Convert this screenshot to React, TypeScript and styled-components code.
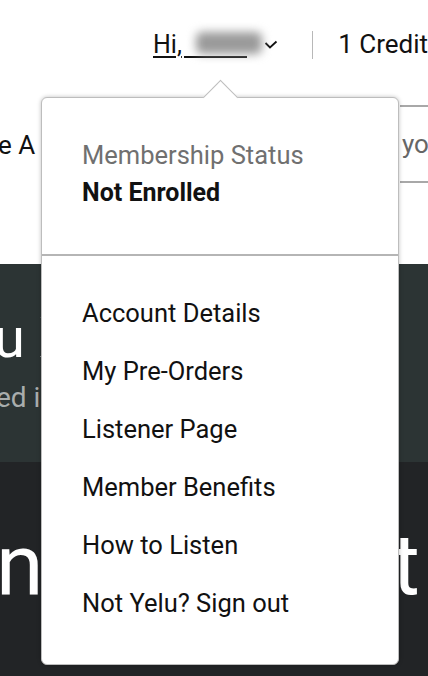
import styled, { createGlobalStyle } from 'styled-components';

const GlobalStyle = createGlobalStyle`
  body {
    margin: 0;
    background: #fff;
    font-family: Roboto, 'Liberation Sans', sans-serif;
    color: #111;
    overflow: hidden;
  }
`;

const menuLinks = [
  'Account Details',
  'My Pre-Orders',
  'Listener Page',
  'Member Benefits',
  'How to Listen',
  'Not Yelu? Sign out',
];

const Chevron = () => (
  <svg width="14" height="10" viewBox="0 0 14 10">
    <polyline
      points="1.5,3 6,7.5 12.5,1.5"
      fill="none"
      stroke="#111"
      strokeWidth="1.8"
    />
  </svg>
);

const App = () => {
  return (
    <Page>
      <GlobalStyle />
      <TopBar>
        <Greeting>
          <span className="hi">Hi,</span>
          <NameSlot>
            <span className="blur" />
          </NameSlot>
          <Chevron />
        </Greeting>
        <VDivider />
        <Credits>1 Credit</Credits>
      </TopBar>

      <SubBar>
        <SubText>e A</SubText>
        <SearchBox>you</SearchBox>
      </SubBar>

      <Hero>
        <HeroTitle>u X</HeroTitle>
        <HeroSub>ed in</HeroSub>
      </Hero>

      <Lower>
        <BigLetter>n</BigLetter>
        <BigLetter>t</BigLetter>
      </Lower>

      <Dropdown>
        <Status>
          <span className="label">Membership Status</span>
          <span className="value">Not Enrolled</span>
        </Status>
        <MenuList>
          {menuLinks.map((link) => (
            <MenuItem key={link}>{link}</MenuItem>
          ))}
        </MenuList>
      </Dropdown>
    </Page>
  );
};

const Page = styled.div`
  position: relative;
  width: 428px;
  height: 676px;
  overflow: hidden;
`;

const TopBar = styled.div`
  display: flex;
  align-items: center;
  height: 88px;
  padding-left: 153px;
  font-size: 25px;
  white-space: nowrap;
`;

const Greeting = styled.div`
  display: flex;
  align-items: center;

  .hi {
    text-decoration: underline;
    text-decoration-thickness: 2px;
    text-underline-offset: 3px;
  }

  svg {
    margin-left: 17px;
    margin-top: 2px;
  }
`;

const NameSlot = styled.span`
  position: relative;
  display: inline-block;
  width: 63px;
  height: 26px;
  margin-left: 2px;
  border-bottom: 2px solid #111;

  .blur {
    position: absolute;
    left: 12px;
    top: 2px;
    width: 66px;
    height: 22px;
    background: #9a9a9a;
    border-radius: 6px;
    filter: blur(5px);
  }
`;

const VDivider = styled.span`
  width: 2px;
  height: 28px;
  margin: 2px 26px 0 34px;
  background: #b8b8b8;
`;

const Credits = styled.span`
  font-size: 26px;
  color: #111;
`;

const SubBar = styled.div`
  display: flex;
  justify-content: space-between;
  align-items: flex-start;
  height: 176px;
`;

const SubText = styled.span`
  margin-top: 42px;
  font-size: 26px;
  line-height: 30px;
  margin-left: -2px;
`;

const SearchBox = styled.div`
  width: 28px;
  height: 78px;
  margin-top: 17px;
  border-top: 2px solid #a8a8a8;
  border-bottom: 2px solid #a8a8a8;
  padding-left: 2px;
  box-sizing: border-box;
  display: flex;
  align-items: center;
  font-size: 26px;
  color: #666;
  overflow: hidden;
`;

const Hero = styled.div`
  height: 198px;
  background: #2c3434;
  padding-top: 44px;
  box-sizing: border-box;
  color: #fff;
`;

const HeroTitle = styled.div`
  font-size: 56px;
  line-height: 60px;
  margin-left: -6px;
`;

const HeroSub = styled.div`
  margin-top: 14px;
  font-size: 28px;
  line-height: 32px;
  color: #a9adad;
  margin-left: -4px;
`;

const Lower = styled.div`
  display: flex;
  justify-content: space-between;
  height: 214px;
  padding: 58px 8px 0 0;
  box-sizing: border-box;
  background: #222426;
`;

const BigLetter = styled.span`
  font-size: 86px;
  line-height: 90px;
  color: #fff;
  margin-left: -4px;
`;

const Dropdown = styled.div`
  position: absolute;
  left: 41px;
  top: 97px;
  width: 358px;
  height: 568px;
  box-sizing: border-box;
  background: #fff;
  border: 1px solid #bdbdbd;
  border-radius: 6px;
  box-shadow: 0 0 4px rgba(0, 0, 0, 0.25);

  &::before {
    content: '';
    position: absolute;
    left: 166px;
    top: -13px;
    width: 24px;
    height: 24px;
    background: #fff;
    border-top: 1px solid #bdbdbd;
    border-left: 1px solid #bdbdbd;
    transform: rotate(45deg);
  }
`;

const Status = styled.div`
  position: relative;
  display: flex;
  flex-direction: column;
  padding: 39px 0 43px 40px;
  border-bottom: 2px solid #b5b5b5;
  font-size: 25.5px;
  line-height: 37px;

  .label {
    color: #707070;
  }

  .value {
    font-weight: 700;
    font-size: 25px;
    color: #111;
  }
`;

const MenuList = styled.ul`
  list-style: none;
  margin: 0;
  padding: 28px 0 0 40px;
`;

const MenuItem = styled.li`
  font-size: 25.5px;
  line-height: 58px;
  color: #111;
`;

export default App;
